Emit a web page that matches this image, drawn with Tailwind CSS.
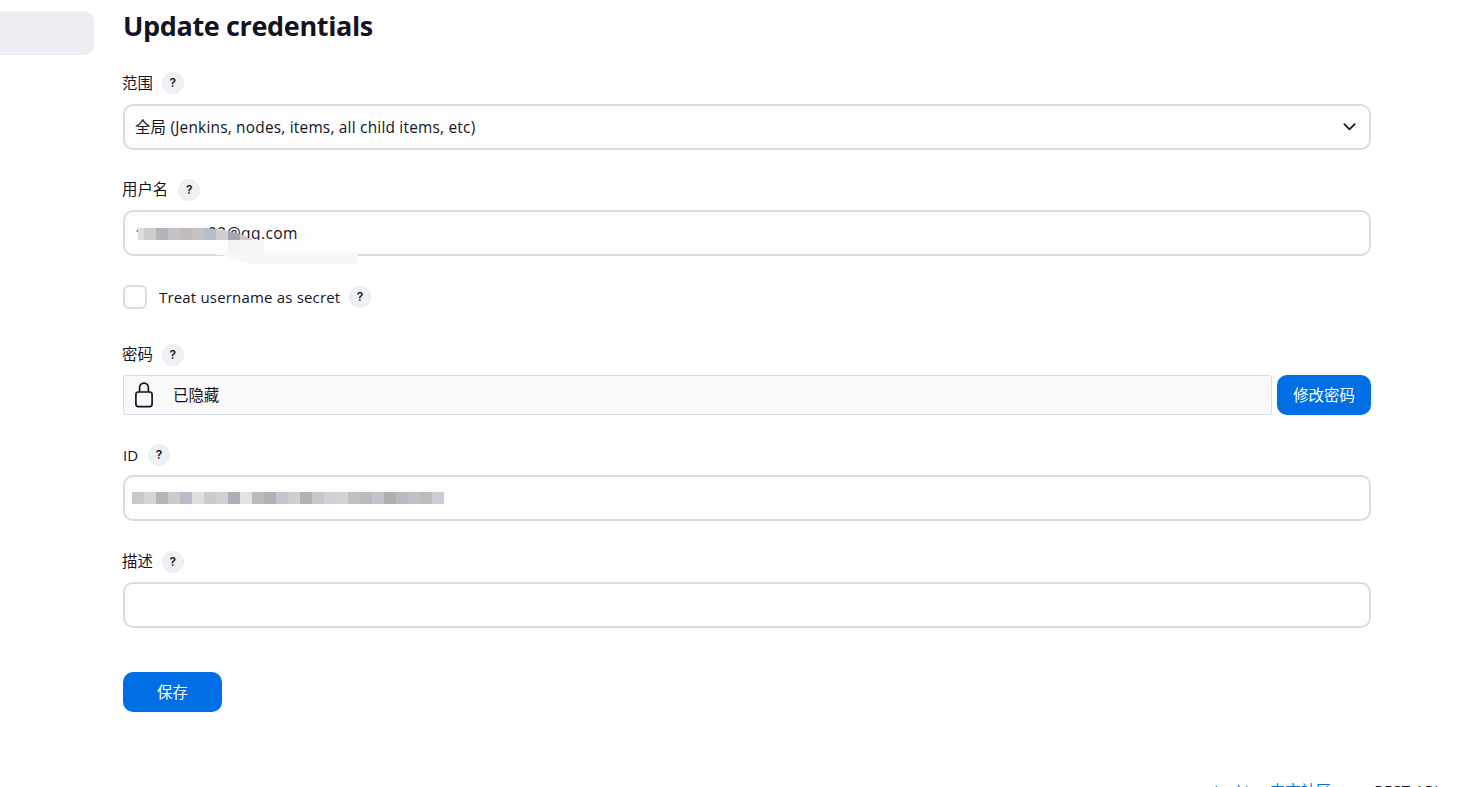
<!DOCTYPE html>
<html lang="zh-CN">
<head>
  <meta charset="UTF-8" />
  <meta name="viewport" content="width=device-width, initial-scale=1.0" />
  <title>Update credentials</title>
  <script src="https://cdn.jsdelivr.net/npm/@tailwindcss/browser@4"></script>
</head>
<body class="bg-white text-[#14141f] h-screen overflow-hidden font-['Open_Sans','Noto_Sans_CJK_SC',sans-serif] text-[15px]">
  <div class="flex h-[775px]">
    <!-- side panel -->
    <aside class="w-[123px] shrink-0 pt-[11px]">
      <div class="w-[94px] h-11 rounded-r-[10px] bg-[#ecedf2]"></div>
    </aside>

    <main class="w-[1248px] pt-2">
      <h1 class="h-9 leading-9 text-[27px] font-bold tracking-[-0.36px] whitespace-nowrap">Update credentials</h1>

      <form>
        <div class="mt-7 h-[22px] flex items-center gap-[9px] -ml-px">
          <label class="pt-0.5 whitespace-nowrap text-[15.4px]">范围</label>
          <span class="size-[22px] rounded-full bg-[#eef1f4] border border-[#e8ecf0] flex items-center justify-center text-xs font-semibold font-[Inter,sans-serif]">?</span>
        </div>
        <div class="mt-[10px] h-[46px] rounded-[10px] border-2 border-[#d6dde8] bg-[#fdfdfd] pl-[10px] pr-3 flex items-center justify-between">
          <span class="pt-0.5 whitespace-nowrap text-[15.4px] tracking-[0.22px]">全局 (Jenkins, nodes, items, all child items, etc)</span>
          <svg class="size-[15px] -mt-0.5" viewBox="0 0 16 16" fill="none" stroke="#14141f" stroke-width="1.8" stroke-linecap="round" stroke-linejoin="round"><path d="M2.5 5.5 8 11l5.500-5.500" /></svg>
        </div>

        <div class="mt-[29px] h-[22px] flex items-center gap-[9px] -ml-px">
          <label class="whitespace-nowrap text-[15.4px]">用户名</label>
          <span class="ml-px size-[22px] rounded-full bg-[#eef1f4] border border-[#e8ecf0] flex items-center justify-center text-xs font-semibold font-[Inter,sans-serif]">?</span>
        </div>
        <div class="relative mt-[9px] h-[46px] rounded-[10px] border-2 border-[#d6dde8] bg-[#fdfdfd] pl-[10px] flex items-center">
          <span class="w-[73px]">1</span><span class="pt-0.5 whitespace-nowrap text-[15.6px] tracking-[0.4px]">22@qq.com</span>
          <!-- masked account number -->
          <svg class="absolute -left-0.5 -top-0.5 w-[240px] h-[56px]" viewBox="0 0 240 56" shape-rendering="crispEdges">
            <path fill="#fdfdfd" d="M13 22h2v10h-2z" />
            <path fill="#dedee0" d="M15 18h6v12h-6z" />
            <path fill="#cccccf" d="M21 18h12v12H21z" />
            <path fill="#b3b4b8" d="M33 18h12v12H33z" />
            <path fill="#c3c2c8" d="M45 18h12v12H45z" />
            <path fill="#c1bbbd" d="M57 18h12v12H57z" />
            <path fill="#c4c2c5" d="M69 18h12v12H69z" />
            <path fill="#b5bfcb" d="M81 18l12 1v11H81z" />
            <path fill="#d1cfcd" d="M93 19l12 2v9H93z" />
            <path fill="#a6a6af" d="M105 21l12 3v6h-12z" />
            <path fill="#cacacf" d="M117 24l12 5v1h-12z" />
            <path fill="#fdfdfd" d="M83 30h22v7H83z" />
            <path fill="#f3f3f6" d="M105 30h12v12h-12z" />
            <path fill="#f7f7f9" d="M117 30h24v12h-24z" />
            <path fill="#fdfdfe" d="M93 44h10v1H93z" />
            <path fill="#f7f8fa" d="M93 43l12-1h130v12H127l-22-7z" />
          </svg>
        </div>

        <div class="mt-[29px] h-6 flex items-center">
          <span class="size-6 rounded-md border-2 border-[#d6dde8] bg-[#fdfdfd]"></span>
          <label class="ml-3 w-[181px] whitespace-nowrap tracking-[0.18px]">Treat username as secret</label>
          <span class="ml-[9px] size-[22px] rounded-full bg-[#eef1f4] border border-[#e8ecf0] flex items-center justify-center text-xs font-semibold font-[Inter,sans-serif]">?</span>
        </div>

        <div class="mt-[35px] h-[22px] flex items-center gap-[9px] -ml-px">
          <label class="whitespace-nowrap text-[15.4px]">密码</label>
          <span class="size-[22px] rounded-full bg-[#eef1f4] border border-[#e8ecf0] flex items-center justify-center text-xs font-semibold font-[Inter,sans-serif]">?</span>
        </div>
        <div class="mt-[9px] h-10 flex gap-[5px]">
          <div class="grow rounded-[3px] border border-[#d6dde8] bg-[#f9f9f9] pl-[11px] flex items-center">
            <svg class="w-[18px] h-[26px]" viewBox="0 0 18 26" fill="none" stroke="#14141f" stroke-width="1.7"><rect x=".9" y="10" width="16.200" height="14.600" rx="2.500" /><path d="M4.600 10V5.500a4.400 4.400 0 0 1 8.800 0V10" /></svg>
            <span class="ml-5 pt-0.5 text-[15.4px]">已隐藏</span>
          </div>
          <button type="button" class="w-[94px] pt-0.5 rounded-[10px] bg-[#006fe6] text-white text-[15.4px] whitespace-nowrap">修改密码</button>
        </div>

        <div class="mt-[29px] h-[22px] flex items-center">
          <label class="w-[25px]">ID</label>
          <span class="size-[22px] rounded-full bg-[#eef1f4] border border-[#e8ecf0] flex items-center justify-center text-xs font-semibold font-[Inter,sans-serif]">?</span>
        </div>
        <div class="mt-[9px] h-[46px] rounded-[10px] border-2 border-[#d6dde8] bg-[#fdfdfd] pl-[7px] flex items-center">
          <div id="mask" class="flex"></div>
        </div>

        <div class="mt-[30px] h-[22px] flex items-center gap-[9px] -ml-px">
          <label class="whitespace-nowrap text-[15.4px]">描述</label>
          <span class="size-[22px] rounded-full bg-[#eef1f4] border border-[#e8ecf0] flex items-center justify-center text-xs font-semibold font-[Inter,sans-serif]">?</span>
        </div>
        <div class="mt-[9px] h-[46px] rounded-[10px] border-2 border-[#d6dde8] bg-[#fdfdfd]"></div>

        <button type="button" class="mt-11 pt-0.5 block w-[99px] h-10 rounded-[10px] bg-[#006fe6] text-white text-[15.4px]">保存</button>
      </form>
    </main>
  </div>

  <footer class="h-6 pr-[22px] flex justify-end gap-[43px] leading-[30px] text-[15px] whitespace-nowrap">
    <a class="text-[#006fe6] tracking-[0.3px]">Jenkins 中文社区</a>
    <a class="tracking-[0.5px]">REST API</a>
  </footer>

  <script>
    const cells = [
      '#c9c9cb', '#d5d5d7', '#b5b5b7', '#cfcaca', '#b9bcc8', '#dedfe1', '#cacacf', '#d5d0d0', '#aeaeb6',
      '#e2e3e5', '#b9b9be', '#b2b0b3', '#c2c5ce', '#cecfd1', '#b1b1b6', '#c6c7c9', '#d0d1d6', '#d3d3d5',
      '#c2bfc1', '#bbbac0', '#c3c4cb', '#b1aeaf', '#b7bac4', '#c0c0c2', '#bcbcbe', '#cbced5'
    ];
    const mask = document.getElementById('mask');
    cells.forEach(color => {
      const cell = document.createElement('div');
      cell.className = 'w-3 h-3';
      cell.style.backgroundColor = color;
      mask.appendChild(cell);
    });
  </script>
</body>
</html>
